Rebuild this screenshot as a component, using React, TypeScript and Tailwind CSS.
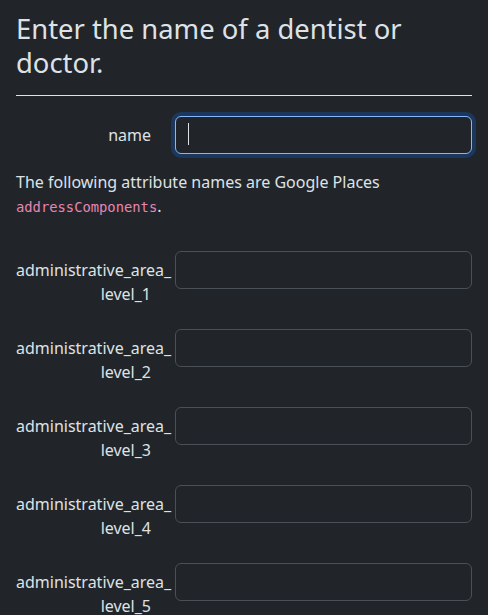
import React from "react";

const levels = [1, 2, 3, 4, 5];

export default function App() {
  return (
    <div
      className="min-h-screen bg-[#212529] text-[#dee2e6] px-4 pt-[12px]"
      style={{ fontFamily: '"Noto Sans", sans-serif' }}
    >
      <h3 className="text-[27.4px] leading-[1.23] font-normal">
        Enter the name of a dentist or doctor.
      </h3>
      <hr className="mt-4 mb-[20px] border-t border-[#dee2e6]" />

      <form>
        <div className="flex mb-4">
          <label className="w-[159px] shrink-0 pr-6 py-[7px] text-right text-base leading-6">
            name
          </label>
          <div className="relative flex-1 flex">
            <input
              type="text"
              className="flex-1 h-[38px] rounded-md bg-[#212529] border border-[#86b7fe] px-3 text-base text-[#dee2e6] outline-none ring-4 ring-[#0d6efd]/25"
            />
            {/* caret of the focused field */}
            <span className="absolute left-[13px] top-[7px] w-px h-[22px] bg-[#dee2e6]" />
          </div>
        </div>

        <p className="text-base leading-6 mb-[32px]">
          The following attribute names are Google Places{" "}
          <code
            className="text-[13.8px] text-[#e685b5]"
            style={{ fontFamily: '"DejaVu Sans Mono", monospace' }}
          >
            addressComponents
          </code>
          .
        </p>

        {levels.map((n) => (
          <div key={n} className="flex mb-4">
            <label className="w-[159px] shrink-0 pr-6 py-[7px] text-right text-base leading-6">
              administrative_area_{"\u200B"}level_{n}
            </label>
            <input
              type="text"
              className="flex-1 h-[38px] rounded-md bg-[#212529] border border-[#495057] px-3 text-base text-[#dee2e6] outline-none"
            />
          </div>
        ))}
      </form>
    </div>
  );
}
